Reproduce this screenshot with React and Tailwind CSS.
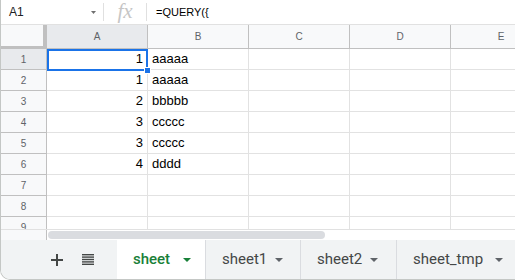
import React from "react";

const data = [
  ["1", "aaaaa"],
  ["1", "aaaaa"],
  ["2", "bbbbb"],
  ["3", "ccccc"],
  ["3", "ccccc"],
  ["4", "dddd"],
  ["", ""],
  ["", ""],
  ["", ""],
];

function Caret({ color, w = 8, h = 4 }) {
  return (
    <svg width={w} height={h} viewBox={`0 0 ${w} ${h}`} className="shrink-0">
      <polygon points={`0,0 ${w},0 ${w / 2},${h}`} fill={color} />
    </svg>
  );
}

function Tab({ label, active, width, pr }) {
  return (
    <div
      className={
        "h-full flex items-center justify-between pl-4 shrink-0 " +
        (active
          ? "bg-white text-[#188038] font-medium"
          : "border-l border-[#dadce0] text-[#444746]")
      }
      style={{ width, paddingRight: pr }}
    >
      <span className="text-[15px] font-['Roboto',Arial,sans-serif] leading-none">{label}</span>
      <Caret color={active ? "#188038" : "#5f6368"} w={8} h={4} />
    </div>
  );
}

export default function App() {
  return (
    <div className="w-[515px] h-[280px] overflow-hidden bg-white border-l border-b border-[#c4c7c5] rounded-bl-[10px] relative font-['Liberation_Sans',Arial,sans-serif]">
      {/* formula bar */}
      <div className="h-[25px] flex items-center border-b border-[#e1e1e1]">
        <div className="w-[102px] h-full flex items-center justify-between pl-[8px] pr-[7px] shrink-0">
          <span className="text-[12px] text-[#202124]">A1</span>
          <Caret color="#6f6f6f" w={5} h={3} />
        </div>
        <div className="w-px h-[18px] bg-[#e0e0e0] shrink-0" />
        <div className="w-[42px] h-full flex items-center justify-center shrink-0">
          <span className="italic font-['Liberation_Serif',serif] text-[21px] text-[#c6c6c6] leading-none -mt-[2px]">
            fx
          </span>
        </div>
        <div className="w-px h-[18px] bg-[#e0e0e0] shrink-0" />
        <div className="pl-[9px] text-[11px] text-black">={"QUERY({"}</div>
      </div>

      {/* grid */}
      <div className="h-[204px] overflow-hidden relative">
        <div className="flex h-[24px]">
          <div className="w-[46px] h-[24px] shrink-0 bg-[#f8f9fa] border-r-[4px] border-b-[3px] border-[#c0c0c0]" />
          {["A", "B", "C", "D", "E"].map((c, i) => (
            <div
              key={c}
              className={
                "w-[101px] h-[24px] shrink-0 border-r border-b border-[#c0c0c0] flex items-center justify-center text-[10px] text-[#5f6368] " +
                (i === 0 ? "bg-[#e8eaed]" : "bg-[#f8f9fa]")
              }
            >
              {c}
            </div>
          ))}
        </div>
        {data.map((r, i) => (
          <div key={i} className="flex h-[21px]">
            <div
              className={
                "w-[46px] h-[21px] shrink-0 border-r border-b border-[#c0c0c0] flex items-center justify-center text-[10px] text-[#5f6368] " +
                (i === 0 ? "bg-[#e8eaed]" : "bg-[#f8f9fa]")
              }
            >
              {i + 1}
            </div>
            <div className="w-[101px] h-[21px] shrink-0 border-r border-b border-[#e2e2e2] flex items-center justify-end pr-[4px] text-[13px] text-black">
              {r[0]}
            </div>
            <div className="w-[101px] h-[21px] shrink-0 border-r border-b border-[#e2e2e2] flex items-center pl-[4px] text-[13px] text-black">
              {r[1]}
            </div>
            <div className="w-[101px] h-[21px] shrink-0 border-r border-b border-[#e2e2e2]" />
            <div className="w-[101px] h-[21px] shrink-0 border-r border-b border-[#e2e2e2]" />
            <div className="w-[101px] h-[21px] shrink-0 border-r border-b border-[#e2e2e2]" />
          </div>
        ))}
        {/* selection */}
        <div className="absolute left-[46px] top-[24px] w-[101px] h-[22px] border-2 border-[#1a73e8]" />
        <div className="absolute left-[143px] top-[42px] w-[7px] h-[7px] bg-[#1a73e8] border border-white" />
      </div>

      {/* scroll area */}
      <div className="h-[11px] flex border-t border-[#e1e1e1]">
        <div className="w-[46px] h-full shrink-0 bg-[#f8f9fa] border-r border-[#c0c0c0]" />
        <div className="flex items-center pl-[1px]">
          <div className="w-[277px] h-[8px] rounded-full bg-[#dadce0]" />
        </div>
      </div>

      {/* tab bar */}
      <div className="h-[39px] bg-[#f1f3f4] flex items-stretch">
        <div className="w-[116px] shrink-0 flex items-center pl-[50px]">
          <svg width="12" height="12" viewBox="0 0 12 12">
            <rect x="5" y="0" width="2" height="12" fill="#444746" />
            <rect x="0" y="5" width="12" height="2" fill="#444746" />
          </svg>
          <svg width="12" height="11" viewBox="0 0 12 11" className="ml-[19px]">
            <rect x="0" y="0" width="12" height="1.4" fill="#444746" />
            <rect x="0" y="2.4" width="12" height="1.4" fill="#444746" />
            <rect x="0" y="4.8" width="12" height="1.4" fill="#444746" />
            <rect x="0" y="7.2" width="12" height="1.4" fill="#444746" />
            <rect x="0" y="9.6" width="12" height="1.4" fill="#444746" />
          </svg>
        </div>
        <Tab label="sheet" active width={88} pr={14} />
        <Tab label="sheet1" width={95} pr={17} />
        <Tab label="sheet2" width={96} pr={18} />
        <Tab label="sheet_tmp" width={120} pr={13} />
      </div>
    </div>
  );
}
